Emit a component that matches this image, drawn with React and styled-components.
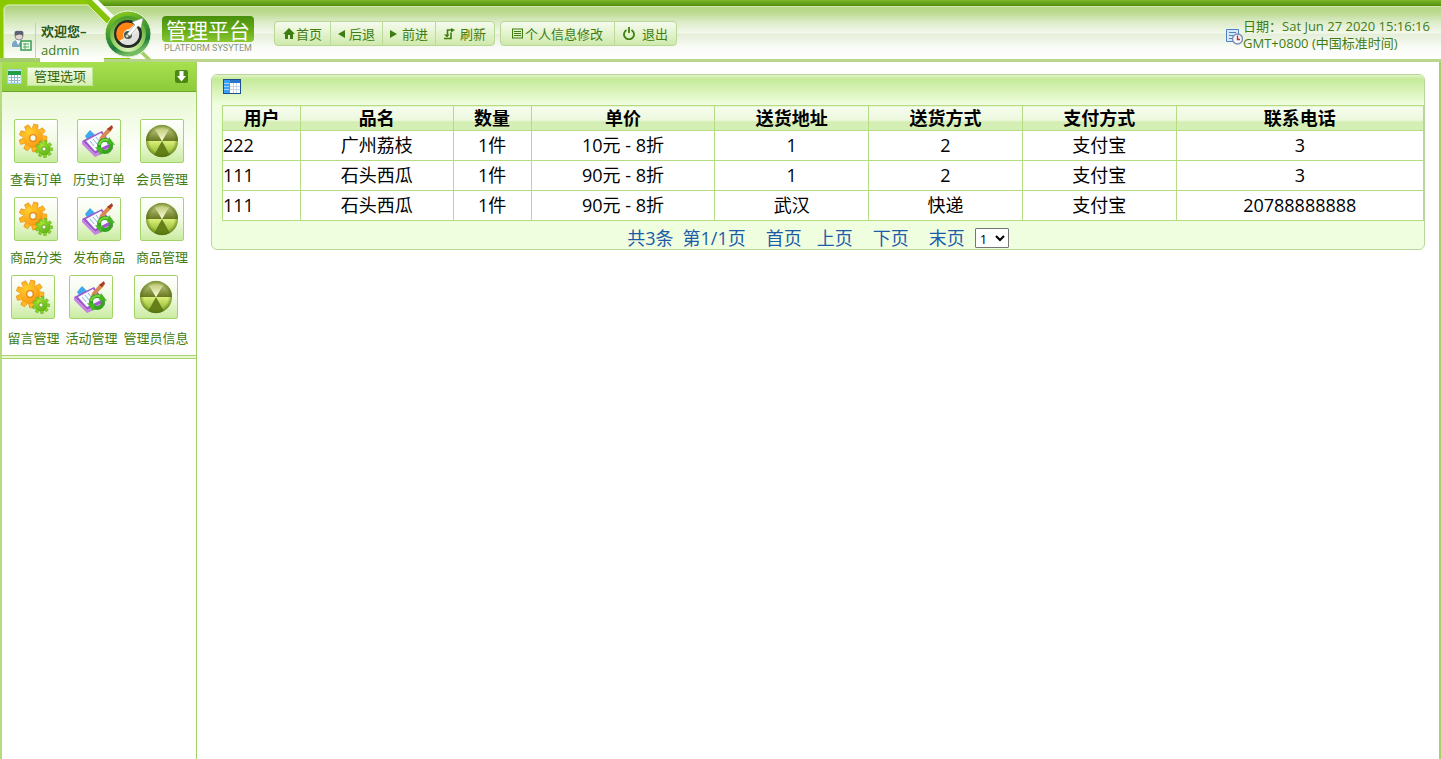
import React from "react";
import styled, { createGlobalStyle } from "styled-components";

const menuRows = [
  [
    { label: "查看订单", icon: "gears" },
    { label: "历史订单", icon: "clipboard" },
    { label: "会员管理", icon: "ball" },
  ],
  [
    { label: "商品分类", icon: "gears" },
    { label: "发布商品", icon: "clipboard" },
    { label: "商品管理", icon: "ball" },
  ],
];

const lastMenuRow = [
  { label: "留言管理", icon: "gears" },
  { label: "活动管理", icon: "clipboard" },
  { label: "管理员信息", icon: "ball" },
];

const columns = [
  { title: "用户", width: "6.5%" },
  { title: "品名", width: "12.7%" },
  { title: "数量", width: "6.5%" },
  { title: "单价", width: "15.3%" },
  { title: "送货地址", width: "12.8%" },
  { title: "送货方式", width: "12.8%" },
  { title: "支付方式", width: "12.8%" },
  { title: "联系电话", width: "auto" },
];

const orders = [
  ["222", "广州荔枝", "1件", "10元 - 8折", "1", "2", "支付宝", "3"],
  ["111", "石头西瓜", "1件", "90元 - 8折", "1", "2", "支付宝", "3"],
  ["111", "石头西瓜", "1件", "90元 - 8折", "武汉", "快递", "支付宝", "20788888888"],
];

function BrandBackdrop() {
  return (
    <Backdrop viewBox="0 0 160 62" aria-hidden="true">
      <defs>
        <linearGradient id="tab" x1="0" y1="0" x2="0" y2="1">
          <stop offset="0" stopColor="#a9ce78" />
          <stop offset="0.3" stopColor="#d3e8bb" />
          <stop offset="0.54" stopColor="#f0f7e8" />
          <stop offset="0.55" stopColor="#dcebc9" />
          <stop offset="1" stopColor="#fdfefb" />
        </linearGradient>
      </defs>
      <path d="M0 0H94L124 30H112L141 59H0Z" fill="#8cc800" />
      <path d="M4 58V10Q4 5 9 5H88L141 58Z" fill="url(#tab)" />
      <path d="M4 58V10Q4 5 9 5H88L112 29" fill="none" stroke="#e4f5c4" />
      <path d="M92 0L120 28H112L86 2V0Z" fill="#86c40c" />
      <path d="M92 0H98L122 24H116Z" fill="#fafdf6" />
      <path d="M120 36L144 60H132L112 40Z" fill="#f7fbf1" />
      <path d="M140 48L152 60H147L136 49Z" fill="#a5cf5e" />
      <path d="M0 58H40V62H0Z" fill="#a4cb6d" />
      <path d="M40 58H104V62H40Z" fill="#fdfefb" />
      <path d="M104 59H150V62H104Z" fill="#b5d38a" />
    </Backdrop>
  );
}

function Emblem() {
  return (
    <svg width="48" height="50" viewBox="0 0 48 50" aria-hidden="true">
      <defs>
        <linearGradient id="ring" x1="0" y1="0" x2="0.3" y2="1">
          <stop offset="0" stopColor="#9bd61c" />
          <stop offset="0.45" stopColor="#4aa02c" />
          <stop offset="0.8" stopColor="#1d7a3c" />
          <stop offset="1" stopColor="#74bd62" />
        </linearGradient>
        <radialGradient id="bowl" cx="0.5" cy="0.85" r="0.8">
          <stop offset="0" stopColor="#e6f8c8" />
          <stop offset="0.5" stopColor="#9bd36a" />
          <stop offset="1" stopColor="#4e9f2c" />
        </radialGradient>
      </defs>
      <circle cx="24" cy="25" r="23" fill="url(#ring)" stroke="#eaf5dc" />
      <circle cx="24" cy="25" r="18" fill="url(#bowl)" />
      <circle cx="24" cy="25" r="14" fill="#262b26" />
      <circle cx="24" cy="25" r="11" fill="#eceee9" />
      <path d="M30 16A11 11 0 0 0 15 32L20 29A6 6 0 0 1 25 20Z" fill="#ff8414" />
      <path d="M21 31L35 22A11 11 0 0 1 17 33Z" fill="#dfe2dc" />
      <circle cx="24" cy="26" r="4" fill="#46574a" />
      <circle cx="23" cy="27" r="1.5" fill="#c9d6c7" />
      <path d="M23 25L31 16L28 13L39 9L37 19L34 17L26 27Z" fill="#fff" stroke="#8b918a" strokeWidth="0.5" />
    </svg>
  );
}

function UserIcon() {
  return (
    <svg width="20" height="22" viewBox="0 0 20 22" aria-hidden="true">
      <path d="M0 17V14Q1 10 6 10Q12 10 12 15V17Z" fill="#7ba5c9" />
      <path d="M4 10L6 15L9 10Z" fill="#fff" />
      <circle cx="7" cy="6" r="4" fill="#e5d6cb" stroke="#8d8a98" />
      <path d="M3 6Q1 0 7 1Q13 0 11 6Q8 3 3 6Z" fill="#5d6175" />
      <rect x="9" y="11" width="10" height="9" fill="#eaf8e7" stroke="#3b9b53" strokeWidth="1.5" />
      <path d="M11 14H17M11 17H17M13 13V19" stroke="#58ac65" />
    </svg>
  );
}

function GridIcon() {
  return (
    <svg width="15" height="15" viewBox="0 0 15 15" aria-hidden="true">
      <rect x="0.5" y="0.5" width="14" height="14" fill="#c9e7f5" stroke="#9cceea" />
      <rect x="2" y="3" width="11" height="10" fill="#fff" />
      <path d="M1 2H14V6H1Z" fill="#1f9e43" />
      <path d="M2 8.5H13M2 11.5H13M4.5 6V14M7.5 6V14M10.5 6V14" stroke="#8fb7c9" />
    </svg>
  );
}

function TableIcon() {
  return (
    <svg width="18" height="15" viewBox="0 0 18 15" aria-hidden="true">
      <rect x="0.5" y="0.5" width="17" height="14" fill="#fff" stroke="#1e4f92" />
      <path d="M1 1H17V4H1Z" fill="#2a74cc" />
      <path d="M1 1H7V14H1Z" fill="#3ba0f5" />
      <path d="M1 4.5H6M1 7.5H6M1 10.5H6" stroke="#9fd6ff" />
      <path d="M7 7.5H17M7 10.5H17M10.5 4V14M13.5 4V14" stroke="#ccd6e4" />
    </svg>
  );
}

function ClockIcon() {
  return (
    <svg width="17" height="16" viewBox="0 0 17 16" aria-hidden="true">
      <path d="M0.5 0.5H12.5V12.5H0.5Z" fill="#d7e8f8" stroke="#4c83c4" />
      <path d="M3 3.5H10M3 6.5H7M3 9.5H6" stroke="#4c83c4" />
      <circle cx="11.5" cy="10" r="5" fill="#f5f6fa" stroke="#7d8db3" strokeWidth="1.4" />
      <path d="M11.5 6.5V10.5H14" fill="none" stroke="#c3302a" strokeWidth="1.4" />
    </svg>
  );
}

function Gear({ x, y, size, fill, stroke }) {
  return (
    <g transform={`translate(${x} ${y}) scale(${size})`}>
      {[0, 40, 80, 120, 160, 200, 240, 280, 320].map((angle) => (
        <path
          key={angle}
          d="M-2.6 -6L-1.8 -11.5H1.8L2.6 -6Z"
          fill={fill}
          stroke={stroke}
          strokeWidth="0.5"
          transform={`rotate(${angle + 12})`}
        />
      ))}
      <circle r="5.6" fill="none" stroke={fill} strokeWidth="5.4" />
      <circle r="2.8" fill="#f8fcef" stroke={stroke} strokeWidth="1.2" />
    </g>
  );
}

function Gears() {
  return (
    <svg width="36" height="36" viewBox="0 0 36 36" aria-hidden="true">
      <defs>
        <radialGradient id="gold" cx="-3" cy="-5" r="17" gradientUnits="userSpaceOnUse">
          <stop offset="0" stopColor="#ffd02c" />
          <stop offset="1" stopColor="#f88a10" />
        </radialGradient>
        <radialGradient id="lime" cx="-3" cy="-5" r="17" gradientUnits="userSpaceOnUse">
          <stop offset="0" stopColor="#a6e62e" />
          <stop offset="1" stopColor="#4fa614" />
        </radialGradient>
      </defs>
      <Gear x={15} y={15} size={1.2} fill="url(#gold)" stroke="#e8860f" />
      <Gear x={26} y={26} size={0.75} fill="url(#lime)" stroke="#4b9a12" />
    </svg>
  );
}

function Clipboard() {
  return (
    <svg width="36" height="36" viewBox="0 0 36 36" aria-hidden="true">
      <path d="M4 13L9 7L14 12L7 18Z" fill="#3fa9ef" />
      <path d="M1 18L21 8L32 23L14 31Z" fill="#a05ace" />
      <path d="M1 18V21L14 34L32 26V23L14 31Z" fill="#c681e2" />
      <path d="M5 18L20 10L28 21L14 28Z" fill="#f7faff" />
      <path d="M9 18L13 23M12 16L17 22M15 14L19 19" stroke="#8eb2cf" />
      <path d="M19 14L27 5L31 7L22 16L18 18Z" fill="#d98a50" />
      <path d="M26 6L31 2L32 5L29 8Z" fill="#a93d24" />
      <circle cx="24" cy="23" r="6" fill="none" stroke="#36a51d" strokeWidth="4" />
      <path d="M18 22A6.5 6.5 0 0 1 28 18" fill="none" stroke="#7ad43c" strokeWidth="2" />
      <path d="M28 14L34 22L26 21ZM20 32L14 24L22 25Z" fill="#46b723" />
    </svg>
  );
}

function Ball() {
  return (
    <svg width="36" height="36" viewBox="0 0 36 36" aria-hidden="true">
      <defs>
        <linearGradient id="ballTop" x1="0" y1="0" x2="0" y2="1">
          <stop offset="0" stopColor="#b3bf62" />
          <stop offset="1" stopColor="#fbfcd8" />
        </linearGradient>
        <linearGradient id="ballSide" x1="0" y1="0" x2="0" y2="1">
          <stop offset="0" stopColor="#c3cf86" />
          <stop offset="1" stopColor="#687820" />
        </linearGradient>
        <linearGradient id="ballLow" x1="0" y1="0" x2="0" y2="1">
          <stop offset="0" stopColor="#dcf07a" />
          <stop offset="1" stopColor="#8fb52b" />
        </linearGradient>
        <radialGradient id="ballRim">
          <stop offset="0.75" stopColor="#4d6a10" stopOpacity="0" />
          <stop offset="1" stopColor="#4d6a10" stopOpacity="0.6" />
        </radialGradient>
      </defs>
      <path d="M18 18L10 4A16 16 0 0 0 2 18Z" fill="url(#ballSide)" />
      <path d="M18 18L26 4A16 16 0 0 1 34 18Z" fill="url(#ballSide)" />
      <path d="M18 18L10 4A16 16 0 0 1 26 4Z" fill="url(#ballTop)" />
      <path d="M18 18H2A16 16 0 0 0 10 32Z" fill="url(#ballLow)" />
      <path d="M18 18H34A16 16 0 0 1 26 32Z" fill="url(#ballLow)" />
      <path d="M18 18L10 32A16 16 0 0 0 26 32Z" fill="#648016" />
      <circle cx="18" cy="18" r="16" fill="url(#ballRim)" />
    </svg>
  );
}

const menuIcons = { gears: Gears, clipboard: Clipboard, ball: Ball };

function MenuItem({ item, gap }) {
  const Icon = menuIcons[item.icon];
  return (
    <MenuLink href="#" $gap={gap}>
      <IconBox>
        <Icon />
      </IconBox>
      {item.label}
    </MenuLink>
  );
}

function App() {
  return (
    <Page>
      <GlobalStyle />
      <Header>
        <Brand>
          <BrandBackdrop />
          <Welcome>
            <UserIcon />
            <WelcomeText>
              <b>欢迎您–</b>
              <span>admin</span>
            </WelcomeText>
          </Welcome>
          <Emblem />
          <Logo>
            <h1>管理平台</h1>
            <p>PLATFORM SYSYTEM</p>
          </Logo>
        </Brand>
        <Toolbar>
          <ToolGroup>
            <ToolButton $pad="8px">
              <svg width="12" height="11" viewBox="0 0 12 11">
                <path d="M6 0L12 6H10V11H7V7H5V11H2V6H0Z" />
              </svg>
              首页
            </ToolButton>
            <ToolButton $gap="4px">
              <svg width="7" height="8" viewBox="0 0 7 8">
                <path d="M7 0V8L0 4Z" />
              </svg>
              后退
            </ToolButton>
            <ToolButton $gap="5px">
              <svg width="7" height="8" viewBox="0 0 7 8">
                <path d="M0 0V8L7 4Z" />
              </svg>
              前进
            </ToolButton>
            <ToolButton $gap="5px" $pad="8px">
              <svg width="11" height="12" viewBox="0 0 11 12">
                <path d="M8 2H3.500V7M0 10.500H7V4.500" fill="none" stroke="currentColor" strokeWidth="1.6" />
                <path d="M7 0L11 2L7 4.500ZM0 6.500H5.500L3 9.500Z" />
              </svg>
              刷新
            </ToolButton>
          </ToolGroup>
          <ToolGroup>
            <ToolButton $gap="2px" $pad="11px">
              <svg width="11" height="11" viewBox="0 0 11 11">
                <path d="M0.500 1H10.500V10H0.500ZM2 3.500H9M2 5.500H9M2 7.500H9" fill="none" stroke="currentColor" strokeWidth="1.2" />
              </svg>
              个人信息修改
            </ToolButton>
            <ToolButton $gap="7px" $pad="8px">
              <svg width="12" height="13" viewBox="0 0 12 13">
                <path d="M3.500 3A5 5 0 1 0 8.500 3M6 0V6" fill="none" stroke="currentColor" strokeWidth="1.8" />
              </svg>
              退出
            </ToolButton>
          </ToolGroup>
        </Toolbar>
        <DateBox>
          <ClockIcon />
          <span>
            日期：Sat Jun 27 2020 15:16:16
            <br />
            GMT+0800 (中国标准时间)
          </span>
        </DateBox>
      </Header>
      <Body>
        <Sidebar>
          <SideHead>
            <GridIcon />
            <h2>管理选项</h2>
            <CollapseButton aria-label="收起">
              <svg width="13" height="13" viewBox="0 0 13 13">
                <path d="M4.500 1H8.500V6H11L6.500 11.500L2 6H4.500Z" fill="#fff" />
              </svg>
            </CollapseButton>
          </SideHead>
          <Menu>
            {menuRows.map((row) => (
              <MenuRow key={row[0].label}>
                {row.map((item) => (
                  <MenuItem key={item.label} item={item} gap="6px" />
                ))}
              </MenuRow>
            ))}
            <MenuRow $tight>
              {lastMenuRow.map((item) => (
                <MenuItem key={item.label} item={item} gap="9px" />
              ))}
            </MenuRow>
          </Menu>
        </Sidebar>
        <Main>
          <Panel>
            <PanelHead>
              <TableIcon />
            </PanelHead>
            <Orders>
              <colgroup>
                {columns.map((col) => (
                  <Col key={col.title} $width={col.width} />
                ))}
              </colgroup>
              <thead>
                <tr>
                  {columns.map((col) => (
                    <th key={col.title}>{col.title}</th>
                  ))}
                </tr>
              </thead>
              <tbody>
                {orders.map((order, i) => (
                  <tr key={i}>
                    {order.map((cell, j) => (
                      <td key={j}>{cell}</td>
                    ))}
                  </tr>
                ))}
              </tbody>
            </Orders>
            <Pager>
              <PagerInfo>
                <span>共3条</span>
                <span>第1/1页</span>
              </PagerInfo>
              <PagerLinks>
                <a href="#">首页</a>
                <a href="#">上页</a>
              </PagerLinks>
              <a href="#">下页</a>
              <PagerJump>
                <a href="#">末页</a>
                <PageSelect aria-label="页码" defaultValue="1">
                  <option value="1">1</option>
                </PageSelect>
              </PagerJump>
            </Pager>
          </Panel>
        </Main>
      </Body>
    </Page>
  );
}

export default App;

const GlobalStyle = createGlobalStyle`
  * {
    box-sizing: border-box;
  }
  body {
    margin: 0;
    background: #fff;
    font-family: "Open Sans", "Noto Sans CJK SC", sans-serif;
    font-size: 13px;
    color: #3f7d13;
  }
  h1, h2, p {
    margin: 0;
    font-weight: normal;
  }
  a {
    color: inherit;
    text-decoration: none;
  }
  button {
    font-family: inherit;
    color: inherit;
    cursor: pointer;
  }
`;

const Page = styled.div`
  display: flex;
  flex-direction: column;
  min-height: 100vh;
`;

const Header = styled.header`
  display: flex;
  height: 62px;
  border-top: 6px solid #5f9c17;
  border-bottom: 3px solid #bad68c;
  border-image: linear-gradient(#7cb82a, #508c0c 10%, #bad68c 11%) 6 0 3 0;
  background: linear-gradient(
    #e4f1d0 0,
    #b7d886 1px,
    #b9d98c 6px,
    #dcebc8 16px,
    #f3f8ec 27px,
    #e4eed8 28px,
    #fafcf8 42px,
    #fff 100%
  );
`;

const Brand = styled.div`
  position: relative;
  display: flex;
  align-items: center;
  width: 274px;
  height: 62px;
  margin-top: -6px;
  padding-left: 12px;
  > * {
    position: relative;
    flex-shrink: 0;
  }
  > svg:nth-of-type(2) {
    margin-top: 6px;
  }
`;

/* sits behind the welcome text and the emblem */
const Backdrop = styled.svg`
  && {
    position: absolute;
    left: 0;
    top: 0;
    width: 160px;
    height: 62px;
  }
`;

const Welcome = styled.div`
  display: flex;
  align-items: center;
  gap: 3px;
  width: 92px;
  padding-top: 20px;
`;

const WelcomeText = styled.div`
  display: flex;
  flex-direction: column;
  padding-left: 5px;
  border-left: 1px solid #c3d3b3;
  line-height: 19px;
  white-space: nowrap;
  b {
    color: #2b5717;
  }
`;

const Logo = styled.div`
  display: flex;
  flex-direction: column;
  align-items: center;
  margin: 8px 0 0 10px;
  h1 {
    padding: 0 4px;
    border-radius: 4px;
    background: linear-gradient(#478f0b, #6aae1b 60%, #8ac733);
    color: #fff;
    font-family: "Noto Sans CJK SC", sans-serif;
    font-size: 21px;
    line-height: 26px;
  }
  p {
    color: #8a9384;
    font-family: Roboto, sans-serif;
    font-size: 9px;
    line-height: 12px;
  }
`;

const Toolbar = styled.nav`
  display: flex;
  align-items: flex-start;
  gap: 5px;
  padding-top: 15px;
`;

const ToolGroup = styled.div`
  display: flex;
  border: 1px solid #b9d795;
  border-radius: 4px;
  background: linear-gradient(#f6fbef, #e3f3cd 50%, #cfe9ac);
`;

const ToolButton = styled.button`
  display: flex;
  align-items: center;
  gap: ${(props) => props.$gap || "1px"};
  height: 23px;
  padding: 0 ${(props) => props.$pad || "7px"};
  border: 0;
  border-left: 1px solid #bddb9a;
  background: none;
  font-size: 13px;
  white-space: nowrap;
  fill: currentColor;
  &:first-child {
    border-left: 0;
  }
`;

const DateBox = styled.div`
  display: flex;
  align-items: center;
  margin: 4px 11px 0 auto;
  line-height: 17px;
  white-space: nowrap;
  svg {
    margin-top: 4px;
  }
`;

const Body = styled.div`
  display: flex;
  flex: 1;
  border-left: 2px solid #b5dc7c;
  border-right: 2px solid #a5d166;
`;

const Sidebar = styled.aside`
  width: 195px;
  flex-shrink: 0;
  border-right: 1px solid #a3cf66;
`;

const SideHead = styled.div`
  display: flex;
  align-items: center;
  height: 30px;
  padding: 0 8px 0 5px;
  border-bottom: 1px solid #6ea52e;
  background: linear-gradient(#a7e04e, #8dcb3c);
  h2 {
    margin-left: 5px;
    padding: 0 6px;
    border: 1px solid #bfe692;
    background: linear-gradient(#f3fae6, #d6efb2);
    font-size: 13px;
    line-height: 17px;
    color: #33660f;
  }
`;

const CollapseButton = styled.button`
  display: flex;
  margin-left: auto;
  padding: 0;
  border: 0;
  border-radius: 2px;
  background: #4a8a12;
`;

const Menu = styled.nav`
  padding: 27px 0 7px;
  border-bottom: 4px double #a9d36f;
  background: linear-gradient(#e6f8cf, #fff 60px);
`;

const MenuRow = styled.div`
  display: flex;
  justify-content: center;
  gap: ${(props) => (props.$tight ? "6px" : "11px")};
  padding: ${(props) => (props.$tight ? "0 2px 0 0" : "0 0 8px")};
`;

const MenuLink = styled.a`
  display: flex;
  flex-direction: column;
  align-items: center;
  gap: ${(props) => props.$gap};
  line-height: 20px;
  white-space: nowrap;
`;

const IconBox = styled.span`
  display: flex;
  align-items: center;
  justify-content: center;
  width: 44px;
  height: 44px;
  border: 1px solid #a3d56b;
  border-radius: 2px;
  background: linear-gradient(#fff, #f1fae3 50%, #c9eca0);
`;

const Main = styled.main`
  flex: 1;
  min-width: 0;
  padding: 12px 14px;
`;

const Panel = styled.section`
  border: 1px solid #b9d79a;
  border-radius: 6px;
  background: #f0fee0;
`;

const PanelHead = styled.div`
  display: flex;
  height: 30px;
  padding: 4px 11px;
  border-radius: 5px 5px 0 0;
  background: linear-gradient(#e2f4cc, #c5ea98 4px, #f0fee0);
`;

const Orders = styled.table`
  width: calc(100% - 10px);
  margin-left: 10px;
  border-collapse: collapse;
  table-layout: fixed;
  background: #fff;
  color: #000;
  font-size: 18px;
  th,
  td {
    padding: 0;
    border: 1px solid #b5dc83;
    text-align: center;
  }
  th {
    height: 25px;
    line-height: 24px;
    background: linear-gradient(#f6fdee, #ecf8dd 60%, #d3edb2 61%, #d6efb8);
  }
  td {
    height: 30px;
    line-height: 29px;
  }
  td:first-child {
    text-align: left;
  }
`;

const Col = styled.col`
  width: ${(props) => props.$width};
`;

const Pager = styled.div`
  display: flex;
  align-items: center;
  justify-content: center;
  gap: 20px;
  height: 28px;
  padding-top: 6px;
  color: #1c5ba8;
  font-size: 18px;
  line-height: 22px;
`;

const PagerInfo = styled.span`
  display: flex;
  gap: 9px;
`;

const PagerLinks = styled.span`
  display: flex;
  gap: 15px;
`;

const PagerJump = styled.span`
  display: flex;
  align-items: center;
  gap: 10px;
`;

const PageSelect = styled.select`
  width: 34px;
  height: 20px;
  border: 1px solid #767676;
  border-radius: 1px;
  background: #fff;
  color: #000;
  font-family: "Open Sans", sans-serif;
  font-size: 13px;
`;
